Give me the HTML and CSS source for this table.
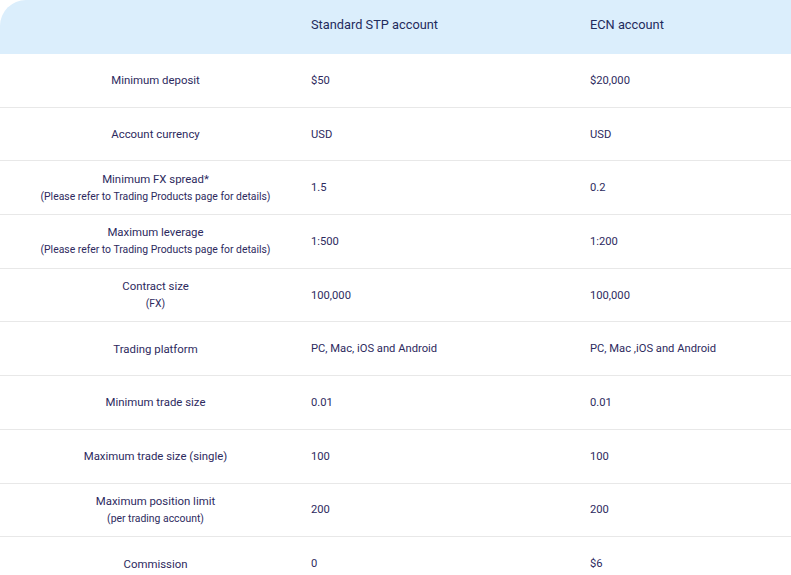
FILE: index.html
```html
<!DOCTYPE html>
<html>
<head>
<meta charset="utf-8">
<link rel="stylesheet" href="styles.css">
</head>
<body>
<div class="table">
  <div class="row head">
    <div class="cell label"></div>
    <div class="cell">Standard STP account</div>
    <div class="cell">ECN account</div>
  </div>
  <div class="row">
    <div class="cell label">Minimum deposit</div>
    <div class="cell">$50</div>
    <div class="cell">$20,000</div>
  </div>
  <div class="row">
    <div class="cell label">Account currency</div>
    <div class="cell">USD</div>
    <div class="cell">USD</div>
  </div>
  <div class="row">
    <div class="cell label"><span>Minimum FX spread*</span><span class="sub">(Please refer to Trading Products page for details)</span></div>
    <div class="cell">1.5</div>
    <div class="cell">0.2</div>
  </div>
  <div class="row">
    <div class="cell label"><span>Maximum leverage</span><span class="sub">(Please refer to Trading Products page for details)</span></div>
    <div class="cell">1:500</div>
    <div class="cell">1:200</div>
  </div>
  <div class="row">
    <div class="cell label"><span>Contract size</span><span class="sub">(FX)</span></div>
    <div class="cell">100,000</div>
    <div class="cell">100,000</div>
  </div>
  <div class="row">
    <div class="cell label">Trading platform</div>
    <div class="cell">PC, Mac, iOS and Android</div>
    <div class="cell">PC, Mac ,iOS and Android</div>
  </div>
  <div class="row">
    <div class="cell label">Minimum trade size</div>
    <div class="cell">0.01</div>
    <div class="cell">0.01</div>
  </div>
  <div class="row">
    <div class="cell label">Maximum trade size (single)</div>
    <div class="cell">100</div>
    <div class="cell">100</div>
  </div>
  <div class="row">
    <div class="cell label"><span>Maximum position limit</span><span class="sub">(per trading account)</span></div>
    <div class="cell">200</div>
    <div class="cell">200</div>
  </div>
  <div class="row">
    <div class="cell label">Commission</div>
    <div class="cell">0</div>
    <div class="cell">$6</div>
  </div>
</div>
</body>
</html>
```

FILE: styles.css
```css
html, body {
  margin: 0;
  padding: 0;
  background: #ffffff;
  overflow: hidden;
}
body {
  font-family: Roboto, "Liberation Sans", Arial, sans-serif;
  color: #2d2a5e;
  font-size: 11.2px;
}
.table {
  width: 791px;
}
.row {
  display: grid;
  grid-template-columns: 311px 279px 1fr;
  height: 53.7px;
  box-sizing: border-box;
  border-bottom: 1px solid #e8e8e8;
}
.row.head {
  height: 54px;
  padding-bottom: 6px;
  background: #dbeefc;
  border-bottom: none;
  border-top-left-radius: 26px;
  font-size: 12.8px;
  color: #1f2b5c;
}
.cell {
  display: flex;
  align-items: center;
}
.cell.label {
  flex-direction: column;
  justify-content: center;
  text-align: center;
  line-height: 18px;
  font-size: 11.4px;
}
.sub {
  font-size: 10.4px;
}
```
